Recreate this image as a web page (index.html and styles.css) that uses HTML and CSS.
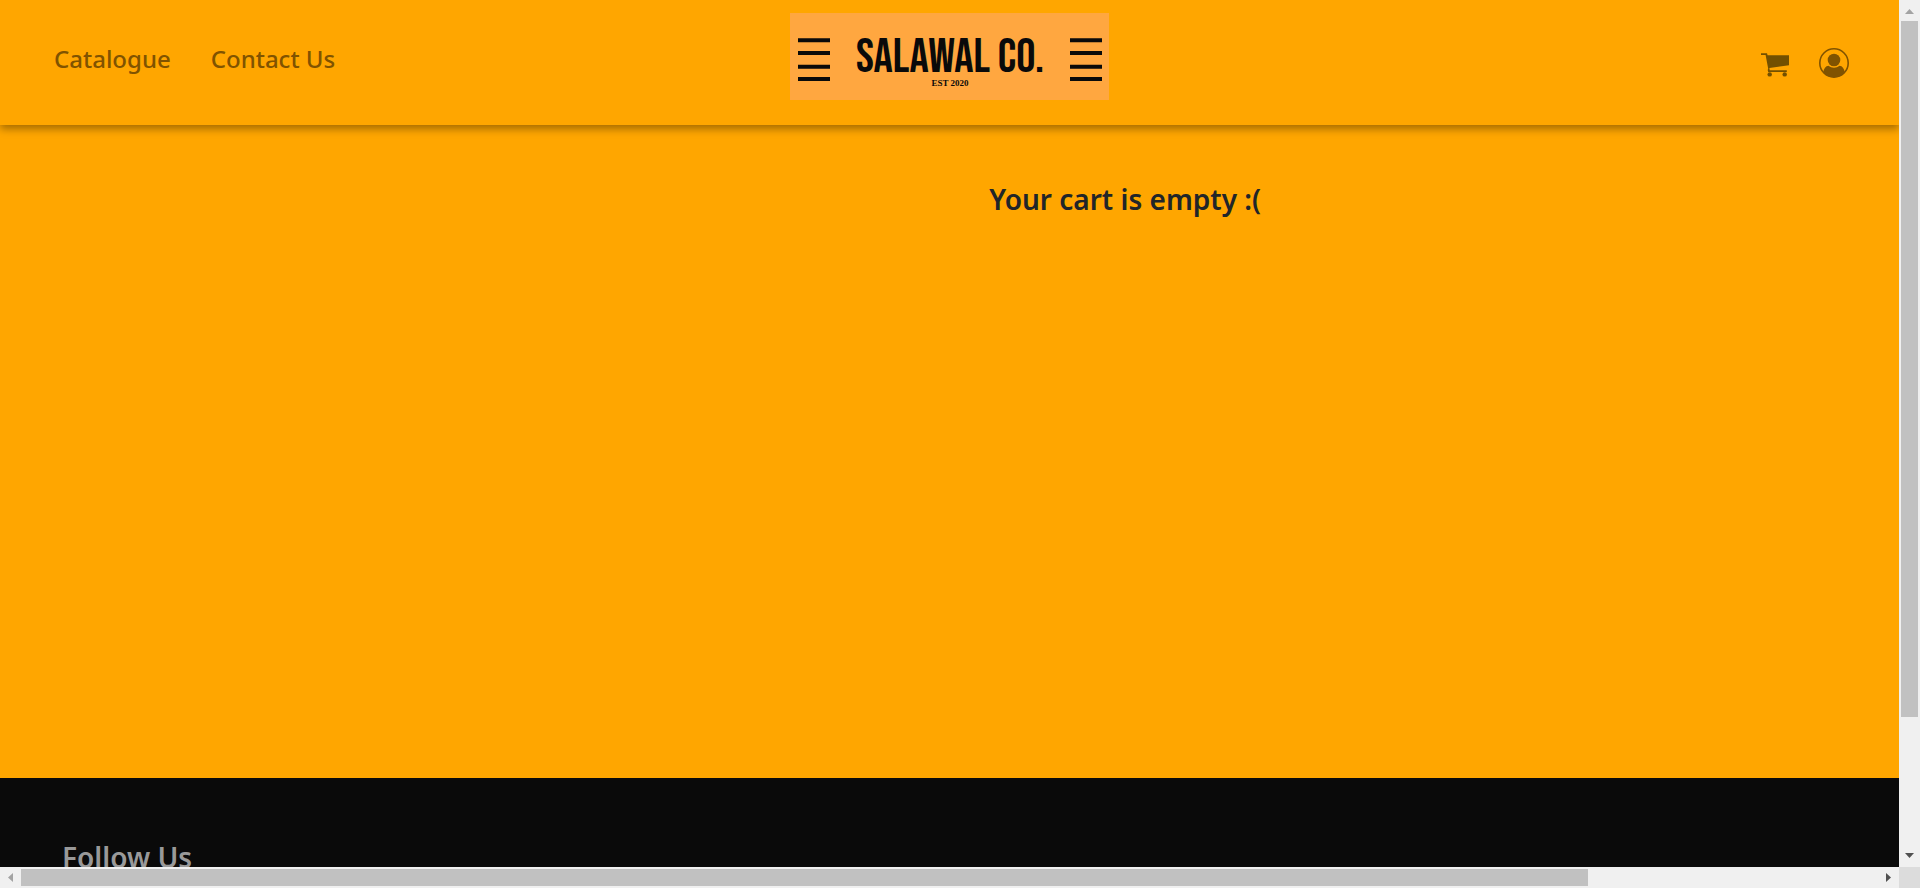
FILE: index.html
```html
<!DOCTYPE html>
<html lang="en">
<head>
<meta charset="utf-8">
<title>Salawal Co.</title>
<link rel="stylesheet" href="styles.css">
</head>
<body>
<div class="viewport">
  <div class="page">
    <header class="navbar">
      <nav class="nav-links">
        <a class="nav-link" href="#">Catalogue</a>
        <a class="nav-link" href="#">Contact Us</a>
      </nav>
      <a class="brand" href="#" aria-label="Salawal Co. home">
        <svg class="brand-bars" viewBox="0 0 32 44" aria-hidden="true"><path d="M0 2.3H32M0 15H32M0 28.8H32M0 41H32" stroke="#0a0a0a" stroke-width="4"/></svg>
        <span class="brand-text">
          <span class="brand-name">SALAWAL CO.</span>
          <span class="brand-est">EST 2020</span>
        </span>
        <svg class="brand-bars" viewBox="0 0 32 44" aria-hidden="true"><path d="M0 2.3H32M0 15H32M0 28.8H32M0 41H32" stroke="#0a0a0a" stroke-width="4"/></svg>
      </a>
      <div class="nav-icons">
        <a class="icon-link" href="#" aria-label="Cart">
          <svg class="cart-icon" viewBox="0 0 28 24"><path d="M0 .3H6L6.6 2.3H28V12.2L8.4 14.9L8.7 17.3H25.8V19H7.2L6.7 17L7.2 15.7L4.6 2H0Z"/><circle cx="8.7" cy="21.4" r="2.2"/><circle cx="23.7" cy="21.4" r="2.2"/></svg>
        </a>
        <a class="icon-link" href="#" aria-label="Account">
          <svg class="user-icon" viewBox="0 0 30 30"><circle cx="15" cy="15" r="14.2" fill="none" stroke="#805300" stroke-width="1.6"/><circle cx="15" cy="12" r="6.3"/><path d="M4.2 24.5C4.8 20.5 6.6 18 9.5 17.8C12.5 20.4 17.5 20.4 20.5 17.8C23.4 18 25.2 20.5 25.8 24.5A14.5 14.5 0 0 1 4.2 24.5Z"/></svg>
        </a>
      </div>
    </header>
    <main class="cart">
      <h1 class="cart-message">Your cart is empty :(</h1>
    </main>
    <footer class="footer">
      <h2 class="footer-title">Follow Us</h2>
    </footer>
  </div>
  <div class="scrollbar scrollbar-y" aria-hidden="true">
    <svg class="arrow" viewBox="0 0 21 21"><path d="M6 14L10.5 9L15 14Z" fill="#a3a3a3"/></svg>
    <div class="track track-y"><div class="thumb"></div></div>
    <svg class="arrow" viewBox="0 0 21 21"><path d="M6 7L10.5 12L15 7Z" fill="#505050"/></svg>
  </div>
  <div class="scrollbar scrollbar-x" aria-hidden="true">
    <svg class="arrow" viewBox="0 0 21 21"><path d="M13 6L8 10.5L13 15Z" fill="#a3a3a3"/></svg>
    <div class="track track-x"><div class="thumb"></div></div>
    <svg class="arrow" viewBox="0 0 21 21"><path d="M8 6L13 10.5L8 15Z" fill="#505050"/></svg>
  </div>
  <div class="corner"></div>
</div>
</body>
</html>
```
FILE: styles.css
```css
* {
  box-sizing: border-box;
}

body {
  margin: 0;
  font-family: "Segoe UI", "Noto Sans", sans-serif;
  color: #212529;
}

.viewport {
  display: grid;
  grid-template-columns: minmax(0, 1fr) 21px;
  grid-template-rows: minmax(0, 1fr) 21px;
  height: 100vh;
}

.page {
  display: flex;
  flex-direction: column;
  overflow: hidden;
  background: #ffa600;
}

.navbar {
  display: grid;
  flex: none;
  grid-template-columns: 1fr auto 1fr;
  align-items: start;
  padding: 13px 50px 25px;
  box-shadow: 0 4px 8px rgba(0, 0, 0, 0.35);
}

.nav-links {
  display: flex;
  gap: 40px;
  padding: 28px 0 0 4px;
}

.nav-link {
  color: #805300;
  font-size: 24px;
  font-weight: 500;
  line-height: 36px;
  text-decoration: none;
}

.brand {
  display: flex;
  justify-content: space-between;
  width: 319px;
  height: 87px;
  padding: 25px 7px 0 8px;
  background: #ffa740;
  color: #0a0a0a;
  text-decoration: none;
}

.brand-bars {
  width: 32px;
  height: 44px;
}

.brand-text {
  display: flex;
  flex-direction: column;
  align-items: center;
}

.brand-name {
  font-family: "Bebas Neue", "Liberation Sans Narrow", sans-serif;
  font-size: 48px;
  font-weight: 400;
  line-height: 40px;
  white-space: nowrap;
}

.brand-est {
  font-family: "Liberation Serif", serif;
  font-size: 9px;
  font-weight: 700;
  line-height: 10px;
}

.nav-icons {
  display: flex;
  justify-content: flex-end;
  align-items: center;
  gap: 30px;
  padding-top: 35px;
}

.icon-link {
  display: flex;
}

.cart-icon {
  width: 28px;
  height: 24px;
  margin-top: 4px;
  fill: #735000;
}

.user-icon {
  width: 30px;
  height: 30px;
  fill: #805300;
}

.cart {
  flex: 1;
  width: 118.5%;
  padding-top: 55px;
}

.cart-message {
  margin: 0;
  font-size: 28px;
  font-weight: 600;
  line-height: 38px;
  text-align: center;
}

.footer {
  flex: none;
  height: 89px;
  padding: 60px 62px 0;
  overflow: hidden;
  background: #0a0a0a;
}

.footer-title {
  margin: 0;
  color: #999;
  font-size: 28px;
  font-weight: 600;
  line-height: 38px;
}

.scrollbar {
  display: flex;
  background: #f0f0f0;
}

.scrollbar-y {
  flex-direction: column;
}

.arrow {
  flex: none;
  width: 21px;
  height: 21px;
}

.track {
  display: flex;
  flex: 1;
}

.track-y {
  flex-direction: column;
  padding: 0 2px;
}

.track-x {
  padding: 2px 0;
}

.thumb {
  background: #c1c1c1;
}

.track-y .thumb {
  height: 84.4%;
}

.track-x .thumb {
  width: 84.4%;
}

.corner {
  background: #dcdcdc;
}
```
